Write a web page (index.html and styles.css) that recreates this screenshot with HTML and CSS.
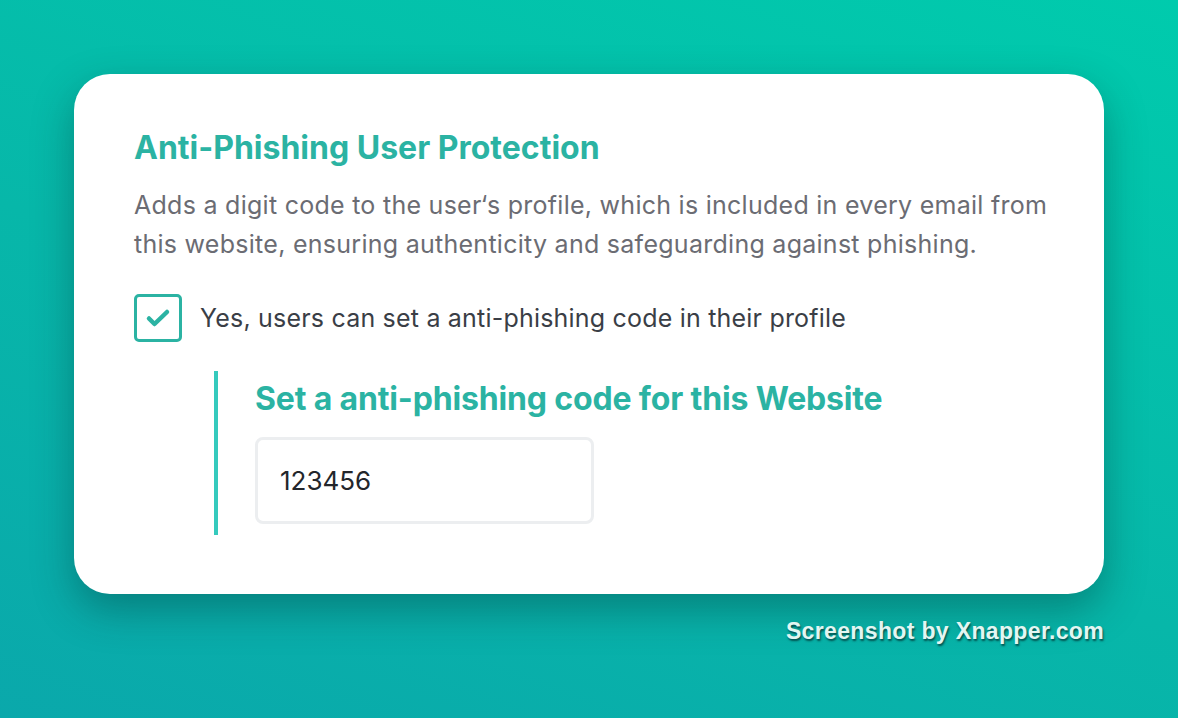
FILE: index.html
```html
<!DOCTYPE html>
<html lang="en">
<head>
  <meta charset="UTF-8" />
  <title>Anti-Phishing User Protection</title>
  <link rel="stylesheet" href="styles.css">
</head>
<body>
  <div class="frame">
    <div class="card">
      <h2 class="title">Anti-Phishing User Protection</h2>
      <p class="desc">Adds a digit code to the user‘s profile, which is included in every email from this website, ensuring authenticity and safeguarding against phishing.</p>

      <label class="check">
        <span class="box">
          <svg width="26" height="20" viewBox="0 0 26 20"><path d="M4 10.5l5.5 5.5L22 4" fill="none" stroke="#2bb3a3" stroke-width="4.5" stroke-linecap="round" stroke-linejoin="round"/></svg>
        </span>
        <span class="check-label">Yes, users can set a anti-phishing code in their profile</span>
      </label>

      <div class="nested">
        <h3 class="sub-title">Set a anti-phishing code for this Website</h3>
        <div class="input">123456</div>
      </div>
    </div>
    <div class="credit">Screenshot by Xnapper.com</div>
  </div>
</body>
</html>
```

FILE: styles.css
```css
* { margin: 0; padding: 0; box-sizing: border-box; }
body {
  width: 1178px;
  height: 718px;
  overflow: hidden;
  font-family: Inter, "Noto Sans", sans-serif;
  background: linear-gradient(20deg, #0aa8ab 0%, #07b7a9 45%, #00cbad 100%);
}
.frame {
  padding: 74px 74px 0;
  display: flex;
  flex-direction: column;
}
.card {
  background: #fff;
  border-radius: 36px;
  padding: 56px 30px 58px 60px;
  height: 520px;
  box-shadow: 0 16px 40px rgba(0, 40, 40, 0.35);
}
.title {
  font-size: 32px;
  font-weight: 700;
  color: #2bb3a3;
  line-height: 36px;
}
.desc {
  margin-top: 20px;
  font-size: 25px;
  letter-spacing: 0.27px;
  line-height: 39px;
  color: #6b6c73;
  max-width: 935px;
}
.check {
  margin-top: 30px;
  display: flex;
  align-items: center;
  gap: 18px;
}
.box {
  width: 48px;
  height: 48px;
  border: 3px solid #2bb3a3;
  border-radius: 5px;
  display: flex;
  align-items: center;
  justify-content: center;
}
.check-label {
  font-size: 25px;
  letter-spacing: 0.2px;
  color: #3a3e46;
}
.nested {
  margin-top: 29px;
  margin-left: 80px;
  border-left: 4px solid #35cabd;
  padding: 10px 0 10px 37px;
  height: 164px;
}
.sub-title {
  font-size: 32px;
  font-weight: 700;
  color: #2bb3a3;
  line-height: 36px;
  letter-spacing: -0.15px;
}
.input {
  margin-top: 20px;
  width: 339px;
  height: 87px;
  border: 3px solid #eceef0;
  border-radius: 8px;
  padding-left: 22px;
  display: flex;
  align-items: center;
  font-size: 26px;
  color: #23262b;
}
.credit {
  align-self: flex-end;
  margin-top: 24px;
  font-family: "Liberation Sans", Arial, sans-serif;
  font-weight: 700;
  font-size: 23px;
  letter-spacing: 0.35px;
  color: #e2f6f2;
  text-shadow: 1px 2px 2px rgba(0, 40, 40, 0.7);
}
```
